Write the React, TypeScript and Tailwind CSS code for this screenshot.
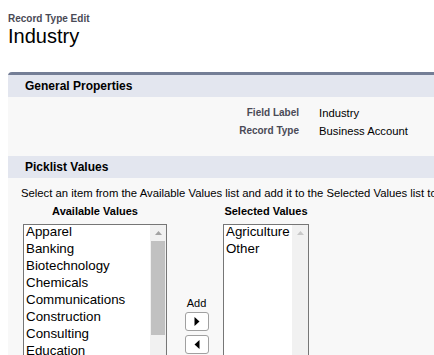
import React from "react";

const leftItems = [
  "Apparel",
  "Banking",
  "Biotechnology",
  "Chemicals",
  "Communications",
  "Construction",
  "Consulting",
  "Education",
  "Electronics",
  "Energy",
  "Engineering",
];

const rightItems = ["Agriculture", "Other"];

function UpArrow({ color }: { color: string }) {
  return (
    <div className="h-[16px] w-full flex items-center justify-center">
      <svg width="7" height="4" viewBox="0 0 7 4">
        <polygon points="0,4 7,4 3.5,0" fill={color} />
      </svg>
    </div>
  );
}

function ListBox({
  items,
  width,
  thumb,
}: {
  items: string[];
  width: string;
  thumb: boolean;
}) {
  return (
    <div
      className={`${width} h-[200px] border border-[#767676] bg-white flex overflow-hidden`}
    >
      <div className="flex-1 min-w-0 pl-[2px] -mt-[2px]">
        {items.map((it) => (
          <div
            key={it}
            className="h-[17px] leading-[17px] text-[13.33px] text-black whitespace-nowrap"
          >
            {it}
          </div>
        ))}
      </div>
      <div className="w-[16px] h-full bg-[#f1f1f1] flex flex-col">
        <UpArrow color={thumb ? "#a3a3a3" : "#c8c8c8"} />
        {thumb && <div className="mx-[1px] h-[94px] bg-[#c1c1c1]" />}
      </div>
    </div>
  );
}

function ArrowButton({ dir }: { dir: "right" | "left" }) {
  return (
    <div className="w-[24px] h-[19px] rounded-[3px] border border-[#a0a0a0] bg-white flex items-center justify-center">
      <svg width="6" height="9" viewBox="0 0 6 9">
        {dir === "right" ? (
          <polygon points="0.5,0 5.5,4.5 0.5,9" fill="#000" />
        ) : (
          <polygon points="5.5,0 0.5,4.5 5.5,9" fill="#000" />
        )}
      </svg>
    </div>
  );
}

export default function App() {
  return (
    <div className="w-[434px] h-[355px] overflow-hidden bg-white font-['Liberation_Sans',Arial,sans-serif] text-black">
      <div className="pl-2 pt-[13px]">
        <div className="text-[10px] leading-[12px] font-bold text-[#4a4a56]">
          Record Type Edit
        </div>
        <div className="text-[20px] leading-[22px] text-black">Industry</div>
      </div>

      <div className="ml-2 mt-[25px] w-[470px] bg-[#f8f8f8] border-t-[3px] border-[#747e96] rounded-tl-[4px]">
        <div className="h-[22px] bg-[#e3e6ef] pl-[17px] flex items-center text-[12px] font-bold">
          General Properties
        </div>
        <div className="h-[59px] pt-[7px]">
          <div className="grid grid-cols-[291px_1fr] gap-x-[20px]">
            <div className="h-[18px] leading-[18px] text-right text-[10px] font-bold text-[#4a4a56]">
              Field Label
            </div>
            <div className="h-[18px] leading-[18px] text-[11.25px]">
              Industry
            </div>
            <div className="h-[18px] leading-[18px] text-right text-[10px] font-bold text-[#4a4a56]">
              Record Type
            </div>
            <div className="h-[18px] leading-[18px] text-[11.25px]">
              Business Account
            </div>
          </div>
        </div>
        <div className="h-[22px] bg-[#e3e6ef] pl-[17px] flex items-center text-[12px] font-bold">
          Picklist Values
        </div>
        <div className="pl-[13px] mt-[8px] text-[11.3px] leading-[14px] whitespace-nowrap">
          Select an item from the Available Values list and add it to the
          Selected Values list to make it available for this record type.
        </div>
        <div className="flex pl-[15px] mt-[5px]">
          <div className="flex flex-col items-center">
            <div className="text-[11px] leading-[13px] font-bold mb-[6px]">
              Available Values
            </div>
            <ListBox items={leftItems} width="w-[144px]" thumb={true} />
          </div>
          <div className="w-[56px] pl-[3px] flex flex-col items-center pt-[92px]">
            <div className="text-[11px] leading-[13px] mb-[2px]">Add</div>
            <ArrowButton dir="right" />
            <div className="h-[4px]" />
            <ArrowButton dir="left" />
            <div className="text-[11px] leading-[13px] mt-[2px]">Remove</div>
          </div>
          <div className="flex flex-col items-center">
            <div className="text-[11px] leading-[13px] font-bold mb-[6px]">
              Selected Values
            </div>
            <ListBox items={rightItems} width="w-[86px]" thumb={false} />
          </div>
        </div>
      </div>
    </div>
  );
}
